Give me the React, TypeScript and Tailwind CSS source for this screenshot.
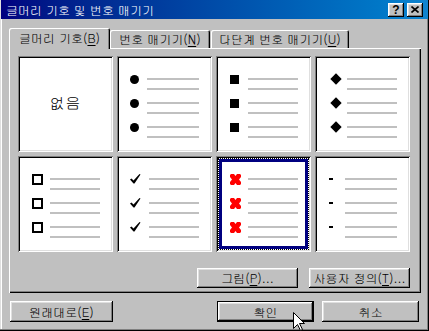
import React from 'react';

const raised =
  'shadow-[inset_-1px_-1px_0_#000,inset_1px_1px_0_#fff,inset_-2px_-2px_0_#808080,inset_2px_2px_0_#dfdfdf]';
const sunken =
  'shadow-[inset_1px_1px_0_#808080,inset_-1px_-1px_0_#fff,inset_2px_2px_0_#000,inset_-2px_-2px_0_#dfdfdf]';

function U({ children }: { children: React.ReactNode }) {
  return <span className="underline underline-offset-2">{children}</span>;
}

function Lines() {
  return (
    <div className="flex flex-col gap-[8px] pt-[5px]">
      <div className="h-[2px] bg-[#c0c0c0]" />
      <div className="h-[2px] bg-[#c0c0c0]" />
    </div>
  );
}

function BulletCell({
  bullet,
  cols,
  selected,
}: {
  bullet: React.ReactNode;
  cols: string;
  selected?: boolean;
}) {
  return (
    <div className={`relative h-[96px] bg-white ${sunken}`}>
      <div className="flex flex-col gap-[7px] pt-[17px]">
        {[0, 1, 2].map((i) => (
          <div key={i} className={`grid ${cols}`}>
            <div className="flex h-[12px] items-center">{bullet}</div>
            <Lines />
          </div>
        ))}
      </div>
      {selected && (
        <div className="absolute inset-[2px] border border-dotted border-black">
          <div className="h-full w-full border-[3px] border-[#000080]" />
        </div>
      )}
    </div>
  );
}

function Check() {
  return (
    <svg width="11" height="10" viewBox="0 0 11 10" className="ml-[13px]">
      <polygon points="0,5.5 1.5,4.5 3.5,6.5 9.5,0 10.5,0.5 4.5,9.5 3.5,9.5" fill="#000" />
    </svg>
  );
}

function Cross() {
  return (
    <svg width="11" height="11" viewBox="0 0 11 11" className="ml-[14px]">
      <polygon
        points="0,1 1,0 4,0 5.5,2 7,0 10,0 11,1 11,3 9,5.5 11,8 11,10 10,11 7,11 5.5,9 4,11 1,11 0,10 0,8 2,5.5 0,3"
        fill="#ff0000"
      />
    </svg>
  );
}

function Btn({
  children,
  className = '',
  isDefault,
}: {
  children: React.ReactNode;
  className?: string;
  isDefault?: boolean;
}) {
  return (
    <div className={`${className} ${isDefault ? 'border border-black' : ''}`}>
      <div className={`flex h-full w-full items-center justify-center text-[12px] text-black ${raised}`}>
        {children}
      </div>
    </div>
  );
}

export default function App() {
  return (
    <div className="relative h-[331px] w-[429px] overflow-hidden bg-[#c0c0c0] font-['Gulim','Noto_Sans_CJK_KR',sans-serif] shadow-[inset_-1px_-1px_0_#000,inset_-2px_-2px_0_#808080,inset_1px_0_0_#dfdfdf,inset_2px_0_0_#fff]">
      {/* Title bar */}
      <div className="mx-[1px] flex h-[19px] items-center justify-between bg-gradient-to-r from-[#000080] to-[#1084d0] pl-[5px] pr-[5px]">
        <span className="text-[12px] leading-none text-white">글머리 기호 및 번호 매기기</span>
        <div className="flex gap-[3px]">
          <div className={`flex h-[14px] w-[16px] items-center justify-center bg-[#c0c0c0] ${raised}`}>
            <span className="font-['Liberation_Sans',sans-serif] text-[12px] font-bold leading-none">?</span>
          </div>
          <div className={`flex h-[14px] w-[16px] items-center justify-center bg-[#c0c0c0] ${raised}`}>
            <svg width="8" height="7" viewBox="0 0 8 7">
              <path d="M0.5 0.5 L7.5 6.5 M7.5 0.5 L0.5 6.5" stroke="#000" strokeWidth="1.6" />
            </svg>
          </div>
        </div>
      </div>

      {/* Tabs */}
      <div className="ml-[9px] mt-[9px] flex h-[20px] items-end text-[12px]">
        <div className="relative z-10 -mb-[1px] flex h-[21px] w-[101px] items-center justify-center rounded-t-[2px] bg-[#c0c0c0] pb-[1px] shadow-[inset_1px_1px_0_#fff,inset_-1px_0_0_#000,inset_-2px_0_0_#808080]">
          글머리 기호(<U>B</U>)
        </div>
        <div className="flex h-[18px] w-[100px] items-center justify-center rounded-t-[2px] shadow-[inset_1px_1px_0_#fff,inset_-1px_0_0_#000,inset_-2px_0_0_#808080]">
          번호 매기기(<U>N</U>)
        </div>
        <div className="ml-[1px] flex h-[18px] w-[138px] items-center justify-center rounded-t-[2px] shadow-[inset_1px_1px_0_#fff,inset_-1px_0_0_#000,inset_-2px_0_0_#808080]">
          다단계 번호 매기기(<U>U</U>)
        </div>
      </div>

      {/* Panel */}
      <div className="ml-[9px] flex h-[245px] w-[412px] flex-col pl-[9px] pt-[8px] shadow-[inset_1px_1px_0_#fff,inset_-1px_-1px_0_#000,inset_-2px_-2px_0_#808080]">
        <div className="grid grid-cols-[95px_95px_95px_95px] gap-[4px]">
          <div className={`flex h-[96px] items-center justify-center bg-white pb-[1px] text-[15px] tracking-[1px] ${sunken}`}>
            없음
          </div>
          <BulletCell
            cols="grid-cols-[30px_52px]"
            bullet={<div className="ml-[13px] h-[9px] w-[9px] rounded-full bg-black" />}
          />
          <BulletCell cols="grid-cols-[32px_50px]" bullet={<div className="ml-[14px] h-[9px] w-[9px] bg-black" />} />
          <BulletCell
            cols="grid-cols-[32px_50px]"
            bullet={
              <div className="ml-[15px] flex h-[11px] w-[11px] items-center justify-center">
                <div className="h-[8px] w-[8px] rotate-45 bg-black" />
              </div>
            }
          />
          <BulletCell
            cols="grid-cols-[32px_50px]"
            bullet={<div className="ml-[14px] h-[11px] w-[11px] border-2 border-black" />}
          />
          <BulletCell cols="grid-cols-[32px_50px]" bullet={<Check />} />
          <BulletCell cols="grid-cols-[32px_50px]" bullet={<Cross />} selected />
          <BulletCell cols="grid-cols-[30px_52px]" bullet={<div className="ml-[14px] h-[2px] w-[4px] bg-black" />} />
        </div>
        <div className="mt-[16px] flex justify-end gap-[11px] pr-[11px]">
          <Btn className="h-[20px] w-[101px]">
            그림(<U>P</U>)...
          </Btn>
          <Btn className="h-[20px] w-[101px]">
            사용자 정의(<U>T</U>)...
          </Btn>
        </div>
      </div>

      {/* Bottom buttons */}
      <div className="ml-[10px] mt-[8px] flex items-center">
        <Btn className="h-[21px] w-[103px]">
          원래대로(<U>E</U>)
        </Btn>
        <Btn className="ml-[104px] h-[21px] w-[97px]" isDefault>
          확인
        </Btn>
        <Btn className="ml-[8px] h-[21px] w-[97px]">취소</Btn>
      </div>

      {/* Mouse cursor */}
      <svg className="absolute left-[293px] top-[312px]" width="13" height="20" viewBox="0 0 13 20">
        <polygon
          points="0.5,0.5 0.5,16.5 4.5,12.5 7.5,18.5 9.5,17.5 6.5,11.5 11.5,11.5"
          fill="#fff"
          stroke="#000"
          strokeWidth="1"
        />
      </svg>
    </div>
  );
}
